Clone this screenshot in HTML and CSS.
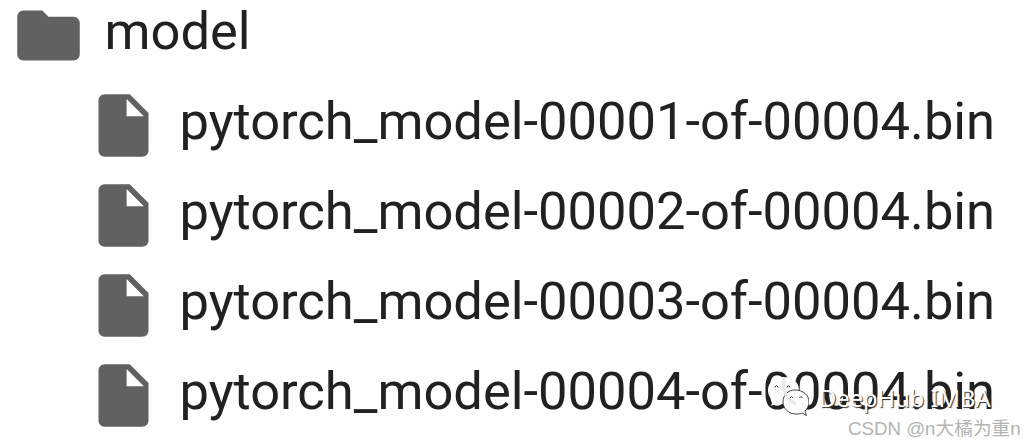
FILE: index.html
```html
<!DOCTYPE html>
<html lang="en">
<head>
<meta charset="utf-8">
<title>model</title>
<link rel="stylesheet" href="styles.css">
</head>
<body>
<svg class="defs" width="0" height="0">
  <symbol id="folder" viewBox="0 0 24 24"><path d="M10 4H4c-1.100 0-2 .9-2 2v12c0 1.100.9 2 2 2h16c1.100 0 2-.9 2-2V8c0-1.100-.9-2-2-2h-8z"/></symbol>
  <symbol id="file" viewBox="0 0 24 24"><path d="M6 2c-1.100 0-2 .9-2 2v16c0 1.100.9 2 2 2h12c1.100 0 2-.9 2-2V8l-6-6H6zm7 7V3.500L18.500 9H13z"/></symbol>
</svg>
<main class="tree">
  <div class="row"><svg class="icon"><use href="#folder"/></svg><span class="name">model</span></div>
  <div class="children">
    <div class="row"><svg class="icon"><use href="#file"/></svg><span class="name">pytorch_model-00001-of-00004.bin</span></div>
    <div class="row"><svg class="icon"><use href="#file"/></svg><span class="name">pytorch_model-00002-of-00004.bin</span></div>
    <div class="row"><svg class="icon"><use href="#file"/></svg><span class="name">pytorch_model-00003-of-00004.bin</span></div>
    <div class="row"><svg class="icon"><use href="#file"/></svg><span class="name">pytorch_model-00004-of-00004.bin</span></div>
  </div>
</main>
<div class="brand">
  <svg class="chat" viewBox="0 0 44 42">
    <path class="bubble" d="M18 2C9 2 3 8 3 15c0 5 2 8 5 10l-2 6 6-3c2 1 4 1 7 1 9 0 15-6 15-14S27 2 18 2z"/>
    <path class="eye" d="M10 12.500q1.500-4 3 0M22 12.500q1.500-4 3 0"/>
    <path class="bubble front" d="M30 15c-7 0-12 5-12 12s6 12 13 12c2 0 4 0 6-1l4.500 2.500-1.500-4.500c2-2 4-5 4-9 0-7-6-12-14-12z"/>
    <path class="shade" d="M19 3c-2 10 0 20 12 26"/>
    <path class="eye" d="M25 23q1.500-3 3 0M34.500 23q1.500-3 3 0"/>
  </svg>
  <span class="brand-name">DeepHub IMBA</span>
</div>
<div class="credit">CSDN @n大橘为重n</div>
</body>
</html>
```
FILE: styles.css
```css
body {
  margin: 0;
  height: 446px;
  position: relative;
  overflow: hidden;
  background: #fefefe;
  font-family: Roboto, "Noto Sans CJK SC", sans-serif;
}
.defs { position: absolute; }
.tree {
  margin-top: -14px;
  padding-left: 10.700px;
}
.children { padding-left: 75px; }
.row {
  display: flex;
  align-items: flex-start;
  gap: 18.800px;
  height: 90px;
}
.icon {
  flex: none;
  width: 75px;
  height: 75px;
  margin-top: 11.600px;
  fill: #616161;
}
.name {
  font-size: 52.480px;
  line-height: 90px;
  color: #212121;
  white-space: nowrap;
}
.brand {
  position: absolute;
  left: 765px;
  top: 375px;
  display: flex;
  align-items: flex-start;
}
.chat { width: 44px; height: 42px; }
.bubble { fill: #fcfcfc; }
.front { stroke: #333; stroke-width: 0.900; }
.shade { fill: none; stroke: #e8e8e8; stroke-width: 3; }
.eye { fill: none; stroke: #444; stroke-width: 1; }
.brand-name {
  margin-left: 10px;
  margin-top: 9px;
  font-family: "Noto Sans", sans-serif;
  font-size: 23.700px;
  line-height: 28px;
  color: #fff;
  white-space: nowrap;
  text-shadow: 1px 1px 1px #333;
}
.credit {
  position: absolute;
  left: 848px;
  top: 416px;
  font-family: "Liberation Sans", "Noto Sans CJK SC", sans-serif;
  font-size: 18.700px;
  line-height: 26px;
  color: #b4b4b4;
  white-space: nowrap;
}
```
